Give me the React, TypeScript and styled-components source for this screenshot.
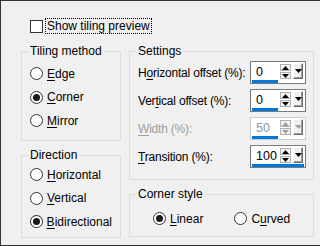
import styled, { createGlobalStyle } from 'styled-components';

const Global = createGlobalStyle`
html, body {
  margin: 0;
  padding: 0;
  background: #f0f0f0;
}
body {
  font-family: "Liberation Sans", Arial, sans-serif;
  font-size: 12px;
  color: #000;
}
`

const settings = [
  { label: 'Horizontal offset (%):', key: 'o', pre: 'H', rest: 'rizontal offset (%):', value: '0', frac: 0.5, disabled: false },
  { label: 'Vertical offset (%):', key: 't', pre: 'Ver', rest: 'ical offset (%):', value: '0', frac: 0.5, disabled: false },
  { label: 'Width (%):', key: 'W', pre: '', rest: 'idth (%):', value: '50', frac: 0.5, disabled: true },
  { label: 'Transition (%):', key: 'T', pre: '', rest: 'ransition (%):', value: '100', frac: 1, disabled: false },
];

function Arrow({ up, color }: { up?: boolean; color: string }) {
  return (
    <svg width="7" height="4" viewBox="0 0 7 4">
      <path d={up ? 'M0 4 L3.5 0 L7 4 Z' : 'M0 0 L7 0 L3.5 4 Z'} fill={color} />
    </svg>
  );
}

function Radio({ checked, pre, akey, rest }: { checked?: boolean; pre: string; akey: string; rest: string }) {
  return (
    <RadioRow>
      <Circle>{checked && <Dot />}</Circle>
      <span>{pre}<U>{akey}</U>{rest}</span>
    </RadioRow>
  );
}

export default function App() {
  return (
    <>
      <Global />
      <Frame>
        <CheckRow>
          <Box />
          <Focus>Show tiling preview</Focus>
        </CheckRow>
        <Columns>
          <Column>
            <Group h={97}>
              <Legend>Tiling method</Legend>
              <RadioList top={3}>
                <Radio pre="" akey="E" rest="dge" />
                <Radio checked pre="" akey="C" rest="orner" />
                <Radio pre="" akey="M" rest="irror" />
              </RadioList>
            </Group>
            <Group h={90}>
              <Legend>Direction</Legend>
              <RadioList top={0}>
                <Radio pre="" akey="H" rest="orizontal" />
                <Radio pre="" akey="V" rest="ertical" />
                <Radio checked pre="" akey="B" rest="idirectional" />
              </RadioList>
            </Group>
          </Column>
          <Column>
            <Group h={136} wide>
              <Legend>Settings</Legend>
              <SettingsList>
                {settings.map((s) => (
                  <SettingRow key={s.label}>
                    <Label disabled={s.disabled}>{s.pre}<U>{s.key}</U>{s.rest}</Label>
                    <Spin disabled={s.disabled}>
                      <SpinTop>
                        <Value disabled={s.disabled}>{s.value}</Value>
                        <UpDown>
                          <Step><Arrow up color={s.disabled ? '#a0a0a0' : '#000'} /></Step>
                          <Step><Arrow color={s.disabled ? '#a0a0a0' : '#000'} /></Step>
                        </UpDown>
                        <Drop><Arrow color={s.disabled ? '#a0a0a0' : '#000'} /></Drop>
                      </SpinTop>
                      <Track>
                        <Bar style={{ width: `${s.frac * 100}%` }} />
                      </Track>
                    </Spin>
                  </SettingRow>
                ))}
              </SettingsList>
            </Group>
            <Group h={50} wide>
              <Legend>Corner style</Legend>
              <CornerRow>
                <Radio checked pre="" akey="L" rest="inear" />
                <Radio pre="C" akey="u" rest="rved" />
              </CornerRow>
            </Group>
          </Column>
        </Columns>
      </Frame>
    </>
  );
}

const Frame = styled.div`
width: 320px;
height: 246px;
box-sizing: border-box;
border-left: 1px solid #333;
border-top: 1px solid #333;
border-bottom: 1px solid #333;
background: #f0f0f0;
overflow: hidden;
`
const CheckRow = styled.div`
display: flex;
align-items: center;
padding: 18px 0 0 29px;
height: 14px;
gap: 3px;
`
const Box = styled.div`
width: 13px;
height: 13px;
box-sizing: border-box;
border: 1px solid #333;
background: #fff;
`
const Focus = styled.span`
outline: 1px dotted #000;
outline-offset: 0;
padding: 0 1px;
line-height: 14px;
`
const Columns = styled.div`
display: flex;
gap: 8px;
padding-left: 20px;
margin-top: 11px;
`
const Column = styled.div`
display: flex;
flex-direction: column;
gap: 7px;
`
const Group = styled.fieldset<{ h: number; wide?: boolean }>`
margin: 0;
padding: 0 8px 0 8px;
width: ${p => p.wide ? 185 : 100}px;
height: ${p => p.h}px;
box-sizing: border-box;
border: 1px solid #dcdcdc;
border-radius: 0;
min-width: 0;
`
const Legend = styled.legend`
padding: 0 2px;
margin-left: -2px;
line-height: 15px;
color: #000;
`
const RadioList = styled.div<{ top: number }>`
display: flex;
flex-direction: column;
padding-top: ${p => p.top}px;
`
const RadioRow = styled.div`
display: flex;
align-items: center;
gap: 4px;
height: 23.5px;
`
const Circle = styled.div`
width: 13px;
height: 13px;
box-sizing: border-box;
border: 1px solid #333;
border-radius: 50%;
background: #fff;
display: flex;
align-items: center;
justify-content: center;
`
const Dot = styled.div`
width: 7px;
height: 7px;
border-radius: 50%;
background: #1a1a1a;
`
const U = styled.span`
text-decoration: underline;
text-underline-offset: 2px;
`
const SettingsList = styled.div`
display: flex;
flex-direction: column;
gap: 5px;
padding-top: 2px;
margin-right: -1px;
`
const SettingRow = styled.div`
display: flex;
align-items: center;
justify-content: space-between;
height: 23px;
`
const Label = styled.span<{ disabled: boolean }>`
letter-spacing: -0.2px;
color: ${p => p.disabled ? '#a0a0a0' : '#000'};
`
const Spin = styled.div<{ disabled: boolean }>`
width: 56px;
height: 23px;
box-sizing: border-box;
border: 1px solid ${p => p.disabled ? '#cccccc' : '#7a7a7a'};
background: #fff;
padding: 1px;
display: flex;
flex-direction: column;
`
const SpinTop = styled.div`
display: flex;
align-items: flex-start;
height: 16px;
`
const Value = styled.span<{ disabled: boolean }>`
flex: 1;
padding-left: 4px;
line-height: 18px;
font-size: 12.5px;
color: ${p => p.disabled ? '#8a9aaa' : '#000'};
`
const UpDown = styled.div`
display: flex;
flex-direction: column;
gap: 1px;
margin-top: 1px;
margin-right: 2px;
`
const Step = styled.div`
width: 11px;
height: 7px;
box-sizing: border-box;
border: 1px solid #b0b0b0;
background: #f4f4f4;
display: flex;
align-items: center;
justify-content: center;
`
const Drop = styled.div`
width: 10px;
height: 16px;
box-sizing: border-box;
border-top: 1px solid #fff;
border-left: 1px solid #fff;
border-right: 1px solid #696969;
border-bottom: 1px solid #696969;
background: #f0f0f0;
display: flex;
align-items: center;
justify-content: center;
box-shadow: inset -1px -1px 0 #a0a0a0;
margin-right: 1px;
`
const Track = styled.div`
height: 3px;
margin-top: 1px;
`
const Bar = styled.div`
height: 3px;
background: #0078d7;
`
const CornerRow = styled.div`
display: flex;
padding: 5px 0 0 15px;
& > div:last-child {
  margin-left: 31px;
}
`
